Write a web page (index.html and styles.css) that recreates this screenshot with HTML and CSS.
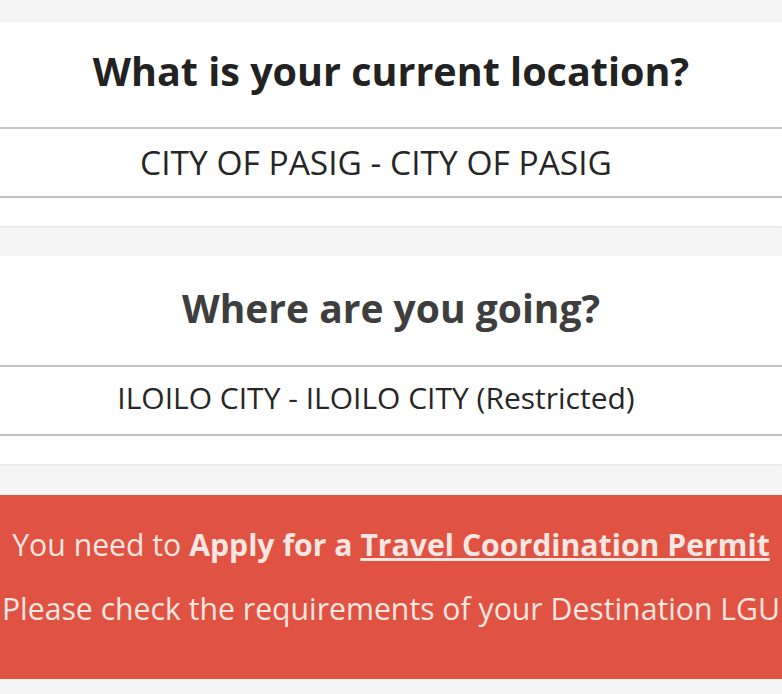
FILE: index.html
```html
<!DOCTYPE html>
<html>
<head>
<meta charset="utf-8">
<link rel="stylesheet" href="styles.css">
</head>
<body>
<div class="page">
  <section class="card">
    <h2 class="card-title">What is your current location?</h2>
    <div class="select"><span class="select-value select-value--large">CITY OF PASIG - CITY OF PASIG</span></div>
  </section>
  <section class="card">
    <h2 class="card-title card-title--muted">Where are you going?</h2>
    <div class="select"><span class="select-value">ILOILO CITY - ILOILO CITY (Restricted)</span></div>
  </section>
  <section class="alert">
    <p class="alert-line">You need to <strong>Apply for a <a class="alert-link" href="#">Travel Coordination Permit</a></strong></p>
    <p class="alert-line">Please check the requirements of your Destination LGU</p>
  </section>
</div>
</body>
</html>
```

FILE: styles.css
```css
html, body {
  margin: 0;
  padding: 0;
}
body {
  background: #f5f5f6;
  font-family: "Open Sans", "Noto Sans", sans-serif;
  width: 782px;
  height: 694px;
  overflow: hidden;
}
.page {
  padding-top: 22px;
  display: flex;
  flex-direction: column;
  gap: 30px;
}
.card {
  background: #fff;
  padding-bottom: 28px;
  box-shadow: 0 1px 2px rgba(0,0,0,0.08);
}
.card-title {
  margin: 0;
  height: 105px;
  box-sizing: border-box;
  padding-bottom: 8px;
  display: flex;
  align-items: center;
  justify-content: center;
  font-size: 39.5px;
  font-weight: 700;
  color: #222;
  white-space: nowrap;
}
.card-title--muted {
  color: #3e3e3e;
  height: 109px;
  padding-bottom: 6px;
  font-size: 39px;
}
.select {
  border-top: 2px solid #c2c2c2;
  border-bottom: 2px solid #c2c2c2;
  height: 67px;
  box-sizing: content-box;
  padding-right: 30px;
  display: flex;
  align-items: center;
  justify-content: center;
}
.select-value {
  font-size: 30px;
  color: #262626;
  white-space: nowrap;
  padding-bottom: 6px;
}
.select-value--large {
  font-size: 33.5px;
  padding-bottom: 2px;
}
.alert {
  background: #e05343;
  height: 184px;
  box-sizing: border-box;
  padding-bottom: 20px;
  margin-top: 1px;
  display: flex;
  flex-direction: column;
  justify-content: center;
  align-items: center;
  color: #fbe6e2;
}
.alert-line {
  margin: 0;
  font-size: 30.2px;
  line-height: 64px;
  white-space: nowrap;
}
.alert-link {
  color: inherit;
  text-decoration: underline;
}
```
